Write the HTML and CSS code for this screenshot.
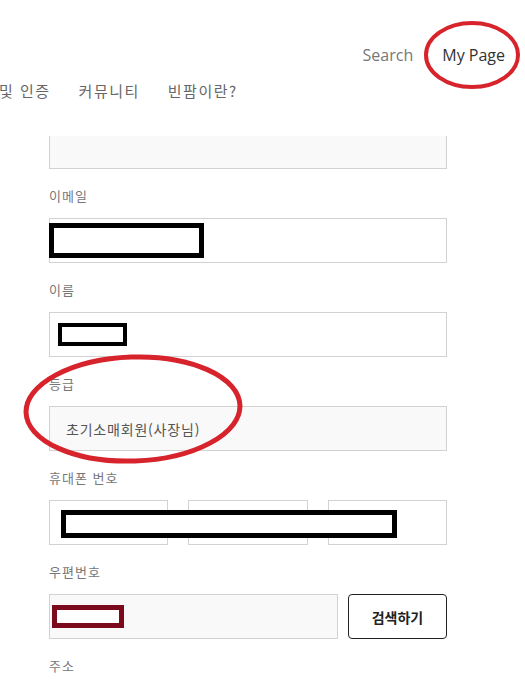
FILE: index.html
```html
<!DOCTYPE html>
<html lang="ko">
<head>
  <meta charset="UTF-8">
  <meta name="viewport" content="width=device-width, initial-scale=1.0">
  <title>My Page</title>
  <link rel="stylesheet" href="styles.css">
</head>
<body>
  <div class="page">
    <header class="header">
      <div class="top-links">
        <a class="link link-muted" href="#">Search</a>
        <a class="link" href="#">My Page</a>
      </div>
      <nav class="nav">
        <a href="#">및 인증</a>
        <a href="#">커뮤니티</a>
        <a href="#">빈팜이란?</a>
      </nav>
    </header>

    <form class="form">
      <div class="field field-cut field-readonly"></div>

      <div class="group">
        <label class="label">이메일</label>
        <div class="field"><span class="mask mask-email"></span></div>
      </div>

      <div class="group">
        <label class="label">이름</label>
        <div class="field"><span class="mask mask-name"></span></div>
      </div>

      <div class="group">
        <label class="label">등급</label>
        <div class="field field-readonly field-text">초기소매회원(사장님)</div>
      </div>

      <div class="group">
        <label class="label">휴대폰 번호</label>
        <div class="phone-row">
          <div class="field"></div>
          <div class="field"></div>
          <div class="field"></div>
          <span class="mask mask-phone"></span>
        </div>
      </div>

      <div class="group">
        <label class="label">우편번호</label>
        <div class="zip-row">
          <div class="field field-readonly"><span class="mask mask-zip"></span></div>
          <button type="button" class="button">검색하기</button>
        </div>
      </div>

      <div class="group">
        <label class="label">주소</label>
      </div>
    </form>

    <!-- red marks drawn over the screenshot -->
    <svg class="mark mark-mypage" width="100" height="72" viewBox="0 0 100 72">
      <ellipse cx="49" cy="35" rx="46" ry="32" fill="none" stroke="#d7242c" stroke-width="4"/>
    </svg>
    <svg class="mark mark-grade" width="224" height="114" viewBox="0 0 224 114">
      <ellipse cx="111" cy="56" rx="107" ry="52" fill="none" stroke="#d7242c" stroke-width="5" transform="rotate(-2 111 56)"/>
    </svg>
  </div>
</body>
</html>
```

FILE: styles.css
```css
body {
  margin: 0;
  font-family: "Noto Sans CJK KR", "Open Sans", sans-serif;
  background-color: white;
  overflow: hidden;
}
.page {
  position: relative;
  width: 525px;
  height: 680px;
  overflow: hidden;
}
.header {
  height: 136px;
}
.top-links {
  display: flex;
  justify-content: flex-end;
  gap: 29px;
  padding: 45px 20px 0 0;
  line-height: 20px;
}
.link {
  font-family: "Open Sans", sans-serif;
  font-size: 16px;
  color: #333;
  text-decoration: none;
}
.link-muted {
  color: #777;
}
.nav {
  display: flex;
  gap: 28px;
  margin: 15px 0 0 -1px;
  line-height: 22px;
}
.nav a {
  font-size: 15px;
  letter-spacing: 1.5px;
  color: #666;
  text-decoration: none;
}
.form {
  width: 398px;
  margin-left: 49px;
}
.group {
  margin-top: 17px;
}
.label {
  display: block;
  height: 20px;
  line-height: 20px;
  font-size: 13px;
  letter-spacing: 1px;
  color: #777;
  margin-bottom: 12px;
}
.field {
  box-sizing: border-box;
  height: 45px;
  border: 1px solid #d2d2d2;
  background-color: white;
  display: flex;
  align-items: center;
}
.field-cut {
  height: 33px;
  border-top: 0;
}
.field-readonly {
  background-color: #f9f9f9;
}
.field-text {
  padding-left: 16px;
  font-size: 14px;
  letter-spacing: 0.8px;
  color: #555;
}
.phone-row {
  position: relative;
  display: grid;
  grid-template-columns: 1fr 1fr 1fr;
  gap: 20px;
}
.zip-row {
  display: grid;
  grid-template-columns: 1fr 99px;
  gap: 10px;
}
.button {
  height: 45px;
  border: 1px solid #222;
  border-radius: 4px;
  background-color: white;
  font-family: "Noto Sans CJK KR", sans-serif;
  font-size: 14px;
  font-weight: bold;
  color: #222;
  cursor: pointer;
}
.mask {
  box-sizing: border-box;
  display: block;
  background-color: white;
  border: 5px solid black;
}
.mask-email {
  width: 155px;
  height: 35px;
  margin-left: -1px;
}
.mask-name {
  width: 69px;
  height: 23px;
  border-width: 4px;
  margin-left: 8px;
}
.mask-zip {
  width: 72px;
  height: 23px;
  margin-left: 2px;
  border-color: #7a0a1c;
}
.mask-phone {
  position: absolute;
  left: 12px;
  top: 10px;
  width: 336px;
  height: 28px;
}
.mark {
  position: absolute;
}
.mark-mypage {
  left: 423px;
  top: 20px;
}
.mark-grade {
  left: 22px;
  top: 353px;
}
```
